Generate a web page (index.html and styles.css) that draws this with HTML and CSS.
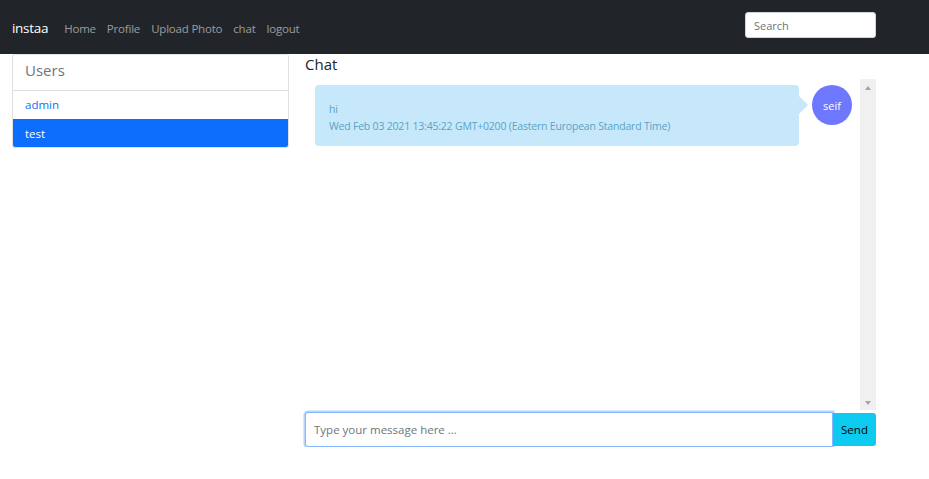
FILE: index.html
```html
<!DOCTYPE html>
<html>
<head>
<meta charset="utf-8">
<link rel="stylesheet" href="styles.css">
</head>
<body>
<nav class="navbar">
  <span class="brand">instaa</span>
  <ul class="nav">
    <li>Home</li>
    <li>Profile</li>
    <li>Upload Photo</li>
    <li>chat</li>
    <li>logout</li>
  </ul>
  <input class="search" type="text" placeholder="Search">
</nav>
<main class="main">
  <aside class="card">
    <div class="card-header">Users</div>
    <div class="item">admin</div>
    <div class="item active">test</div>
  </aside>
  <section class="chat">
    <h2 class="title">Chat</h2>
    <div class="box">
      <div class="messages">
        <div class="msg">
          <div class="bubble">
            <div>hi</div>
            <div>Wed Feb 03 2021 13:45:22 GMT+0200 (Eastern European Standard Time)</div>
          </div>
          <div class="avatar">seif</div>
        </div>
      </div>
      <div class="scrollbar">
        <span class="arrow up"></span>
        <span class="arrow down"></span>
      </div>
    </div>
    <form class="send-row">
      <input class="msg-input" type="text" placeholder="Type your message here ...">
      <button class="send" type="button">Send</button>
    </form>
  </section>
</main>
</body>
</html>
```
FILE: styles.css
```css
* { box-sizing: border-box; }
body {
  margin: 0;
  font-family: "Open Sans", "Noto Sans", sans-serif;
  background: #fff;
  color: #212529;
}
.navbar {
  height: 54px;
  background: #212529;
  display: flex;
  align-items: center;
  padding: 2px 53px 0 12px;
}
.brand {
  color: #fff;
  font-size: 13.5px;
  margin-right: 16px;
  letter-spacing: -0.3px;
}
.nav {
  list-style: none;
  display: flex;
  gap: 11px;
  margin: 0;
  padding: 0;
  flex: 1;
}
.nav li {
  color: rgba(255,255,255,0.55);
  font-size: 11.5px;
  letter-spacing: -0.2px;
}
.search {
  width: 131px;
  height: 26px;
  margin-bottom: 6px;
  border: 1px solid #ced4da;
  border-radius: 3px;
  padding: 0 8px;
  font-family: inherit;
  font-size: 11px;
  color: #212529;
}
.search::placeholder { color: #6c757d; }
.main {
  display: flex;
  padding: 0 53px 0 12px;
}
.card {
  width: 277px;
  height: 94px;
  border: 1px solid #dfdfdf;
  border-top-color: #e6e6e6;
  border-radius: 3px;
  overflow: hidden;
  align-self: flex-start;
}
.card-header {
  height: 36px;
  border-bottom: 1px solid #dfdfdf;
  padding: 0 12px 5px;
  display: flex;
  align-items: center;
  font-size: 15px;
  color: #6c757d;
}
.item {
  height: 28px;
  display: flex;
  align-items: center;
  padding: 0 12px 2px;
  font-size: 11.5px;
  color: #0d6efd;
}
.item.active {
  background: #0d6efd;
  color: #fff;
  height: 30px;
}
.chat {
  flex: 1;
  margin-left: 16px;
  display: flex;
  flex-direction: column;
}
.title {
  margin: 0;
  height: 25px;
  padding-top: 0;
  font-size: 15px;
  font-weight: 400;
  line-height: 20px;
  color: #212529;
}
.box {
  height: 331px;
  display: flex;
}
.messages {
  flex: 1;
  padding: 6px 8px 0 10px;
}
.msg {
  display: flex;
  align-items: flex-start;
}
.bubble {
  position: relative;
  width: 484px;
  height: 61px;
  background: #c7e8fa;
  border-radius: 4px;
  padding: 16px 14px 0;
  font-size: 10.5px;
  line-height: 17px;
  color: #5aa3c7;
  letter-spacing: -0.2px;
}
.bubble::after {
  content: "";
  position: absolute;
  right: -9px;
  top: 11px;
  border-left: 9px solid #c7e8fa;
  border-top: 9px solid transparent;
  border-bottom: 9px solid transparent;
}
.avatar {
  margin-left: 13px;
  width: 40px;
  height: 40px;
  border-radius: 50%;
  background: #6e78ff;
  color: #fff;
  font-size: 11px;
  display: flex;
  align-items: center;
  justify-content: center;
}
.scrollbar {
  width: 16px;
  background: #f0f0f0;
  display: flex;
  flex-direction: column;
  justify-content: space-between;
  align-items: center;
  padding: 7px 0 5px;
}
.arrow {
  width: 0;
  height: 0;
  border-left: 3.5px solid transparent;
  border-right: 3.5px solid transparent;
}
.arrow.up { border-bottom: 4px solid #a3a3a3; }
.arrow.down { border-top: 4px solid #a3a3a3; }
.send-row {
  display: flex;
  margin: 2px 0 0;
  height: 35px;
}
.msg-input {
  flex: 1;
  height: 35px;
  border: 1px solid #86b7fe;
  border-radius: 3px 0 0 3px;
  box-shadow: 0 0 0 1.5px #b8d4fd;
  outline: none;
  padding: 0 8px;
  font-family: inherit;
  font-size: 11.5px;
}
.msg-input::placeholder { color: #6c757d; }
.send {
  width: 43px;
  height: 33px;
  margin-top: 1px;
  border: none;
  border-radius: 0 3px 3px 0;
  background: #0dcaf0;
  color: #000;
  font-family: inherit;
  font-size: 11.5px;
  padding: 0;
}
```
